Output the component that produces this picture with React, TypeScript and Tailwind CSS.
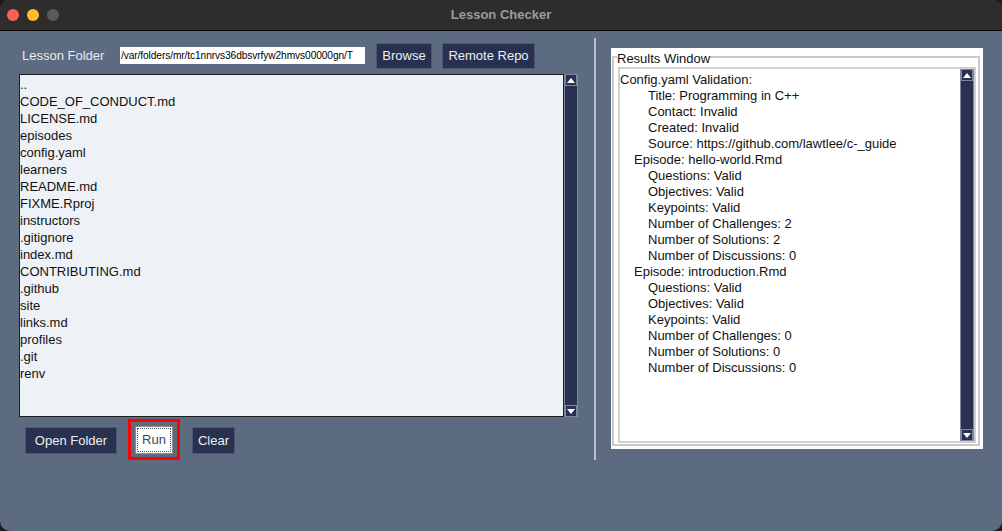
const files = [
  "..",
  "CODE_OF_CONDUCT.md",
  "LICENSE.md",
  "episodes",
  "config.yaml",
  "learners",
  "README.md",
  "FIXME.Rproj",
  "instructors",
  ".gitignore",
  "index.md",
  "CONTRIBUTING.md",
  ".github",
  "site",
  "links.md",
  "profiles",
  ".git",
  "renv",
];

// [indent level, text]
const results: [number, string][] = [
  [0, "Config.yaml Validation:"],
  [2, "Title: Programming in C++"],
  [2, "Contact: Invalid"],
  [2, "Created: Invalid"],
  [2, "Source: https://github.com/lawtlee/c-_guide"],
  [1, "Episode: hello-world.Rmd"],
  [2, "Questions: Valid"],
  [2, "Objectives: Valid"],
  [2, "Keypoints: Valid"],
  [2, "Number of Challenges: 2"],
  [2, "Number of Solutions: 2"],
  [2, "Number of Discussions: 0"],
  [1, "Episode: introduction.Rmd"],
  [2, "Questions: Valid"],
  [2, "Objectives: Valid"],
  [2, "Keypoints: Valid"],
  [2, "Number of Challenges: 0"],
  [2, "Number of Solutions: 0"],
  [2, "Number of Discussions: 0"],
];

function Arrow({ up }: { up?: boolean }) {
  return (
    <div className="flex h-[12px] w-full items-center justify-center border border-[#7d879b] bg-[#283250]">
      <svg width="8" height="5" viewBox="0 0 8 5">
        {up ? <polygon points="0,5 8,5 4,0" fill="#fff" /> : <polygon points="0,0 8,0 4,5" fill="#fff" />}
      </svg>
    </div>
  );
}

function Scrollbar() {
  return (
    <div className="flex h-full w-[14px] flex-col border-x border-[#7d879b] bg-[#283250]">
      <Arrow up />
      <div className="flex-1" />
      <Arrow />
    </div>
  );
}

function NavyButton({ label, className = "" }: { label: string; className?: string }) {
  return (
    <div
      className={`flex items-center justify-center border border-[#4b5672] bg-[#283250] text-[13px] font-medium text-[#eceef2] ${className}`}
    >
      {label}
    </div>
  );
}

export default function App() {
  return (
    <div className="h-[531px] w-[1002px] bg-[#1b1b1b] font-['Liberation_Sans',Arial,sans-serif]">
      <div className="flex h-full w-full flex-col overflow-hidden rounded-[10px] bg-[#5d6b81]">
        {/* Title bar */}
        <div className="relative flex h-[31px] shrink-0 items-center justify-center border-b border-black bg-[#2e2d2c]">
          <div className="absolute left-[7px] top-[9px] flex gap-[8px]">
            <span className="h-[12px] w-[12px] rounded-full bg-[#fe5f57]" />
            <span className="h-[12px] w-[12px] rounded-full bg-[#febc2e]" />
            <span className="h-[12px] w-[12px] rounded-full bg-[#5b5a59]" />
          </div>
          <span className="text-[13px] font-bold text-[#9b9b9b]">Lesson Checker</span>
        </div>

        {/* Body */}
        <div className="flex flex-1 pt-[11px]">
          {/* Left column */}
          <div className="ml-[19px] flex w-[560px] flex-col">
            <div className="flex h-[26px] items-center pt-[1px]">
              <span className="ml-[3px] w-[98px] text-[13px] text-[#e8eaee]">Lesson Folder</span>
              <div className="flex h-[17px] w-[245px] items-center overflow-hidden whitespace-nowrap bg-white px-[1px] text-[10.2px] tracking-[-0.1px] text-black">
                /var/folders/mr/tc1nnrvs36dbsvrfyw2hmvs00000gn/T
              </div>
              <NavyButton label="Browse" className="ml-[11px] h-[26px] w-[56px]" />
              <NavyButton label="Remote Repo" className="ml-[10px] h-[26px] w-[93px]" />
            </div>

            <div className="mt-[6px] flex h-[343px]">
              <div className="w-[545px] border border-[#1f1f1f] bg-[#eef1f6] pt-[1px] text-[13px] leading-[17px] text-[#111]">
                {files.map((f, i) => (
                  <div key={i}>{f}</div>
                ))}
              </div>
              <Scrollbar />
            </div>

            <div className="mt-[2px] flex items-start">
              <NavyButton label="Open Folder" className="ml-[6px] mt-[8px] h-[27px] w-[92px]" />
              <div className="ml-[11px] flex h-[41px] w-[52px] items-center justify-center border-[3px] border-[#ff0000] bg-[#5d6b81]">
                <div className="flex h-[28px] w-[38px] items-center justify-center border border-[#8d8d8d] bg-white">
                  <div className="flex h-[24px] w-[34px] items-center justify-center border border-dotted border-[#555] text-[13px] text-[#3c4660]">
                    Run
                  </div>
                </div>
              </div>
              <NavyButton label="Clear" className="ml-[12px] mt-[8px] h-[27px] w-[43px]" />
            </div>
          </div>

          {/* Separator */}
          <div className="ml-[15px] mt-[-4px] h-[422px] w-[2px] bg-[#b9bec8]" />

          {/* Results */}
          <div className="ml-[15px] mt-[6px] h-[401px] w-[372px] bg-white pl-[1px] pr-[3px] pt-[2px]">
            <fieldset className="h-[396px] border-2 border-[#c9c9c9] pb-[1px] pl-[4px] pr-[2px]">
              <legend className="-ml-[1px] px-0 text-[13px] leading-[14px] text-[#111]">
                <span className="relative top-[2px]">Results Window</span>
              </legend>
              <div className="mt-[3px] flex h-[376px] border-2 border-[#d0d0d0]">
                <div className="flex-1 pt-[3px] text-[13px] leading-[16px] text-[#111]">
                  {results.map(([lvl, t], i) => (
                    <div key={i} className={lvl === 0 ? "" : lvl === 1 ? "pl-[14px]" : "pl-[28px]"}>
                      {t}
                    </div>
                  ))}
                </div>
                <Scrollbar />
              </div>
            </fieldset>
          </div>
        </div>
      </div>
    </div>
  );
}
